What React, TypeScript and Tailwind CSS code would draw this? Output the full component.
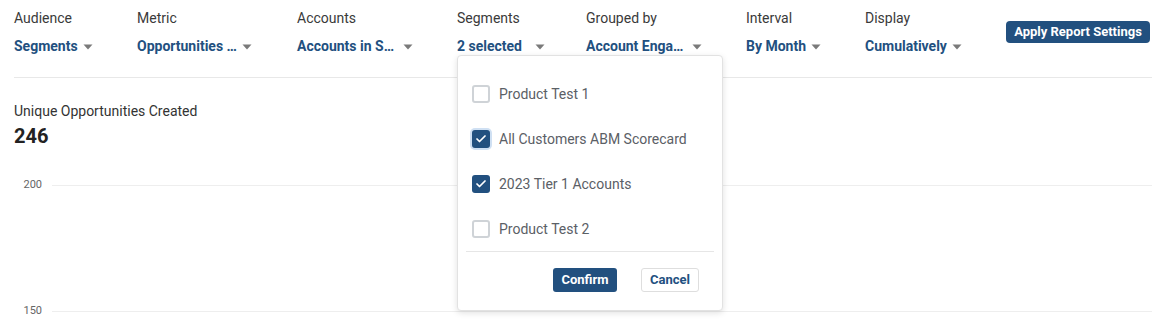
import { Check } from 'lucide-react';

const filters = [
  { label: 'Audience', value: 'Segments', w: 'w-[123px]', gap: 'ml-[5px]' },
  { label: 'Metric', value: 'Opportunities …', w: 'w-[160px]', gap: 'ml-[5px]' },
  { label: 'Accounts', value: 'Accounts in S…', w: 'w-[160px]', gap: 'ml-[9px]' },
  { label: 'Segments', value: '2 selected', w: 'w-[129px]', gap: 'ml-[13px]' },
  { label: 'Grouped by', value: 'Account Enga…', w: 'w-[160px]', gap: 'ml-[9px]' },
  { label: 'Interval', value: 'By Month', w: 'w-[119px]', gap: 'ml-[5px]' },
  { label: 'Display', value: 'Cumulatively', w: 'w-[141px]', gap: 'ml-[5px]' },
];

const segments = [
  { name: 'Product Test 1', checked: false },
  { name: 'All Customers ABM Scorecard', checked: true, focus: true },
  { name: '2023 Tier 1 Accounts', checked: true },
  { name: 'Product Test 2', checked: false },
];

function Caret() {
  return (
    <svg width="10" height="6" viewBox="0 0 10 6" className="shrink-0">
      <path d="M0.5 0.5 L9.5 0.5 L5 5.5 Z" fill="#7a7a7a" />
    </svg>
  );
}

function SegmentsMenu() {
  return (
    <div className="absolute left-[457px] top-[55px] z-10 w-[266px] h-[256px] bg-white border border-[#e2e2e2] rounded-[4px] shadow-[0_2px_6px_rgba(0,0,0,0.12)]">
      <div className="pt-[29px] pl-[14px] flex flex-col gap-[27px]">
        {segments.map((s) => (
          <div key={s.name} className="flex items-center h-[18px]">
            {s.checked ? (
              <span
                className={`w-[18px] h-[18px] rounded-[3px] bg-[#22507f] flex items-center justify-center ${
                  s.focus ? 'ring-2 ring-[#cfe0f3]' : ''
                }`}
              >
                <Check className="w-[12px] h-[12px] text-white" strokeWidth={3.5} />
              </span>
            ) : (
              <span className="w-[18px] h-[18px] rounded-[3px] border-2 border-[#cfd3d7] bg-white" />
            )}
            <span className="ml-[9px] text-[14px] text-[#5b6066]">{s.name}</span>
          </div>
        ))}
      </div>
      <div className="mt-[13px] mx-[8px] border-t border-[#e6e6e6]" />
      <div className="flex justify-end gap-[24px] pr-[23px] pt-[16px]">
        <button className="w-[64px] h-[24px] rounded-[3px] bg-[#22507f] text-white text-[13px] font-bold">
          Confirm
        </button>
        <button className="w-[58px] h-[24px] rounded-[3px] border border-[#dedede] bg-white text-[#22507f] text-[13px] font-bold">
          Cancel
        </button>
      </div>
    </div>
  );
}

export default function App() {
  return (
    <div className="relative w-[1152px] h-[328px] overflow-hidden bg-white font-['Roboto',sans-serif]">
      <div className="flex ml-[14px] pt-[10px] h-[78px] border-b border-[#e8e8e8]">
        {filters.map((f) => (
          <div key={f.label} className={`${f.w} shrink-0`}>
            <div className="text-[14px] text-[#3a3a3a] leading-[17px]">{f.label}</div>
            <div className="mt-[11px] flex items-center text-[14px] font-bold text-[#22507f] leading-[17px] whitespace-nowrap">
              <span>{f.value}</span>
              <span className={f.gap}>
                <Caret />
              </span>
            </div>
          </div>
        ))}
        <button className="mt-[11px] h-[22px] w-[144px] rounded-[4px] bg-[#22507f] text-white text-[13px] font-bold leading-[22px] whitespace-nowrap">
          Apply Report Settings
        </button>
      </div>

      <div className="pl-[14px] pt-[25px]">
        <div className="text-[14px] text-[#333] leading-[17px]">Unique Opportunities Created</div>
        <div className="text-[20px] font-bold text-[#222] leading-[24px] mt-[4px]">246</div>
      </div>

      <div className="mt-[29px] flex flex-col">
        <div className="flex items-center h-[16px]">
          <span className="w-[42px] text-right text-[11px] text-[#666]">200</span>
          <div className="ml-[10px] flex-1 border-t border-[#eeeeee]" />
        </div>
        <div className="h-[110px]" />
        <div className="flex items-center h-[16px]">
          <span className="w-[42px] text-right text-[11px] text-[#666]">150</span>
          <div className="ml-[10px] flex-1 border-t border-[#eeeeee]" />
        </div>
      </div>

      <SegmentsMenu />
    </div>
  );
}
